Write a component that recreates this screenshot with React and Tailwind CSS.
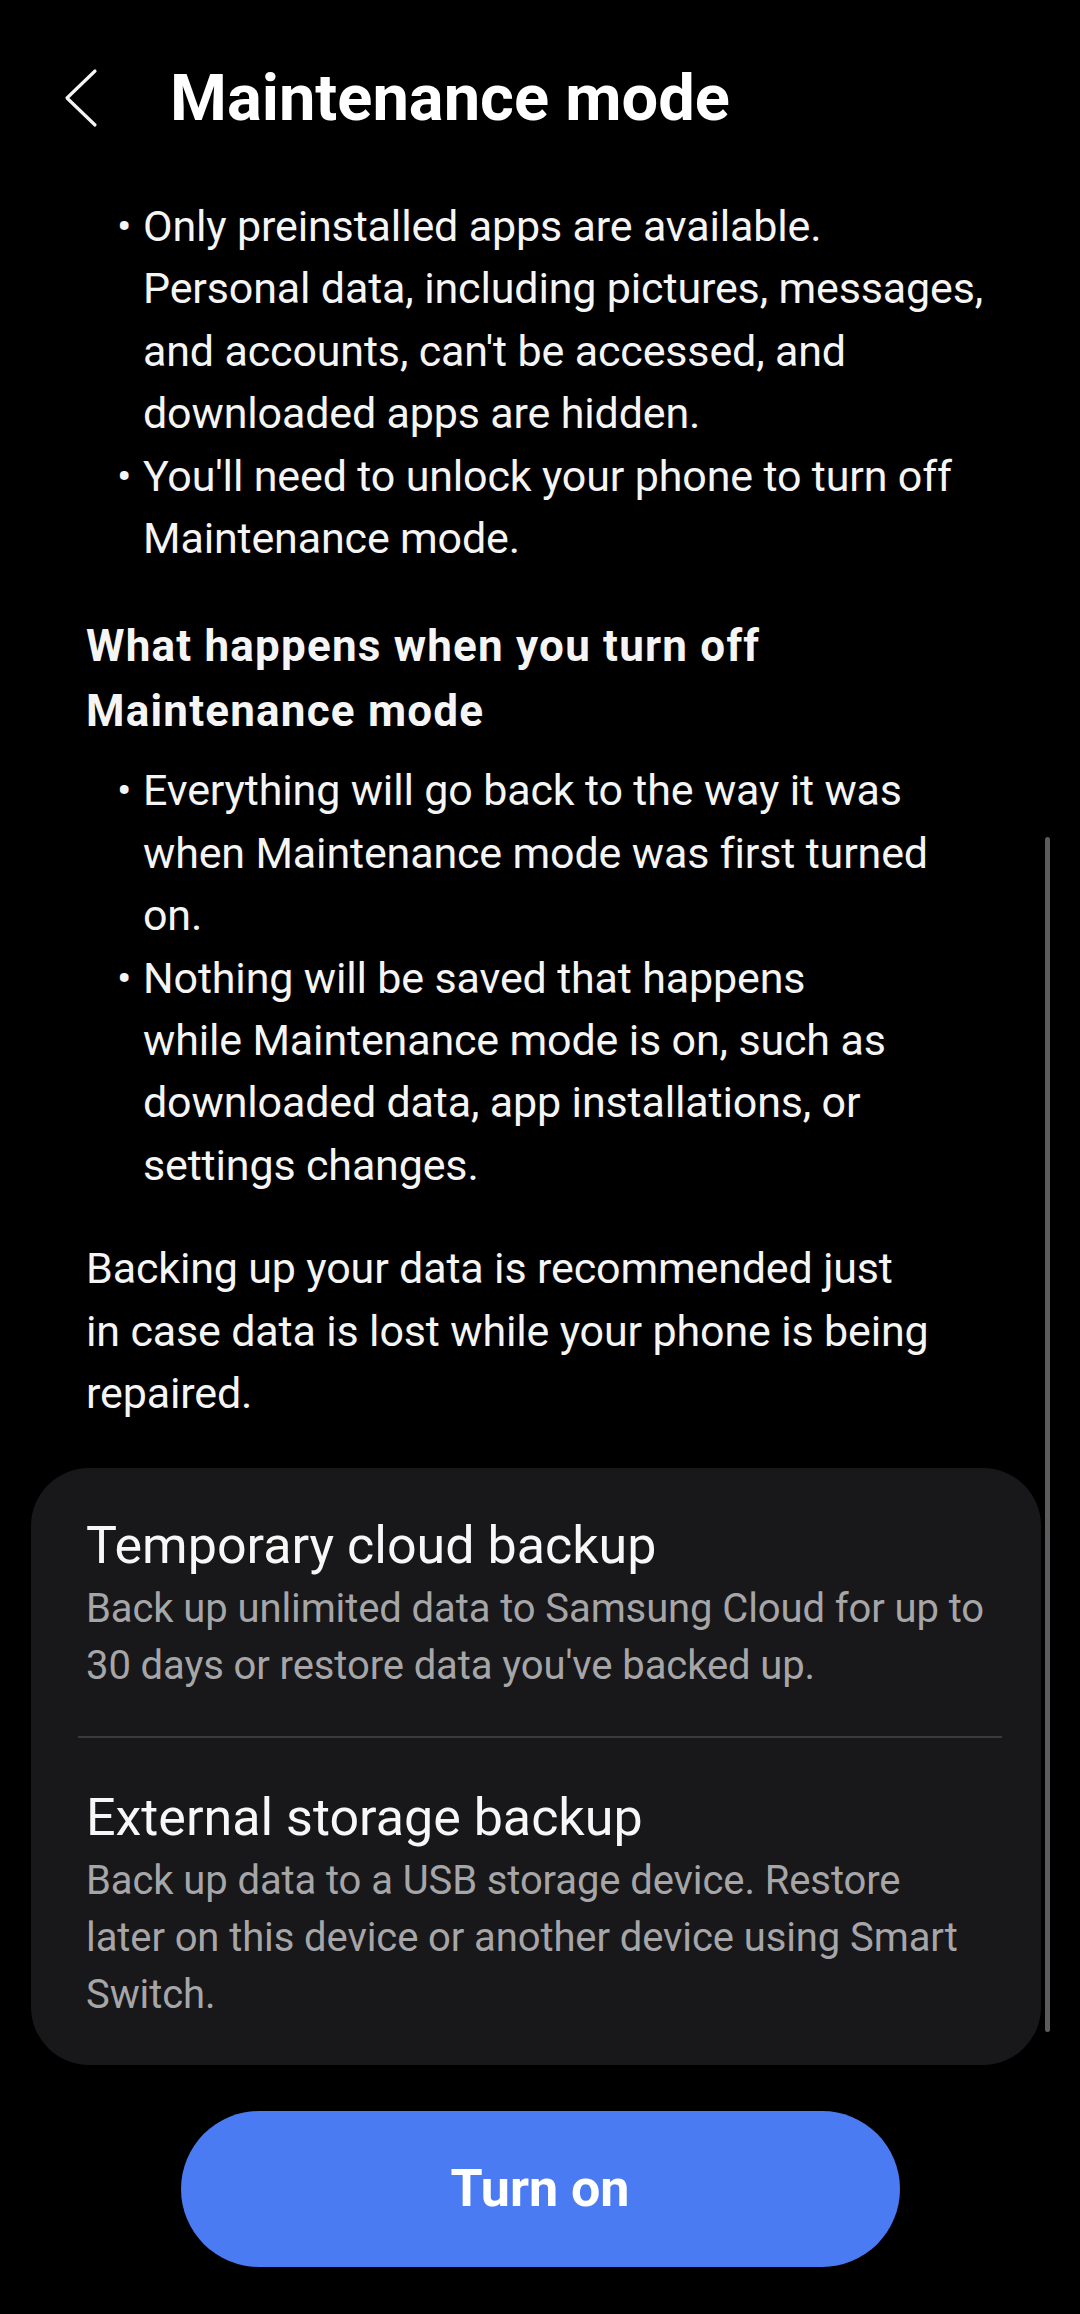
import React from 'react';

const listOne = [
  ['Only preinstalled apps are available.', 'Personal data, including pictures, messages,', "and accounts, can't be accessed, and", 'downloaded apps are hidden.'],
  ["You'll need to unlock your phone to turn off", 'Maintenance mode.'],
];

const listTwo = [
  ['Everything will go back to the way it was', 'when Maintenance mode was first turned', 'on.'],
  ['Nothing will be saved that happens', 'while Maintenance mode is on, such as', 'downloaded data, app installations, or', 'settings changes.'],
];

const backups = [
  { title: 'Temporary cloud backup', lines: ['Back up unlimited data to Samsung Cloud for up to', "30 days or restore data you've backed up."] },
  { title: 'External storage backup', lines: ['Back up data to a USB storage device. Restore', 'later on this device or another device using Smart', 'Switch.'] },
];

function Lines({ lines }) {
  return lines.map((line) => (
    <div key={line} className="whitespace-nowrap">{line}</div>
  ));
}

function BulletList({ items }) {
  return (
    <div className="pl-[117px] text-[43px] leading-[62.4px] tracking-[-0.15px] text-[#f5f5f5]">
      {items.map((lines) => (
        <div key={lines[0]} className="flex">
          <span className="w-[26px] shrink-0">•</span>
          <div><Lines lines={lines} /></div>
        </div>
      ))}
    </div>
  );
}

export default function App() {
  return (
    <div className="relative h-[2314px] w-[1080px] overflow-hidden bg-black font-['Roboto',sans-serif] text-white">
      <header className="flex h-[195px] items-center pl-[64px]">
        <svg width="34" height="60" viewBox="0 0 34 60" fill="none" stroke="#f5f5f5" strokeWidth="3.2" strokeLinecap="round" strokeLinejoin="round">
          <polyline points="31,3 3,30 31,57" />
        </svg>
        <h1 className="ml-[72px] text-[65px] font-bold leading-[62px]">Maintenance mode</h1>
      </header>

      <BulletList items={listOne} />

      <div className="mt-[45px] pl-[86px] text-[44px] font-bold leading-[65px] tracking-[1.2px] text-[#f5f5f5]">
        <Lines lines={['What happens when you turn off', 'Maintenance mode']} />
      </div>

      <div className="mt-[15px]">
        <BulletList items={listTwo} />
      </div>

      <div className="mt-[41px] pl-[86px] text-[43px] leading-[62.4px] tracking-[-0.15px] text-[#f5f5f5]">
        <Lines lines={['Backing up your data is recommended just', 'in case data is lost while your phone is being', 'repaired.']} />
      </div>

      <section className="ml-[31px] mt-[43px] w-[1010px] rounded-[58px] bg-[#18181a]">
        {backups.map((item, i) => (
          <div key={item.title}>
            {i > 0 && <div className="ml-[47px] mr-[39px] h-[2px] bg-[#3a3a3c]" />}
            <div className="pb-[42px] pl-[55px] pr-[30px] pt-[46px] [&:not(:first-child)]:pt-[48px]">
              <div className="whitespace-nowrap text-[52px] leading-[64px] text-[#f7f7f7]">{item.title}</div>
              <div className="mt-[2px] text-[40px] leading-[57px] tracking-[-0.1px] text-[#a6a6a8]">
                <Lines lines={item.lines} />
              </div>
            </div>
          </div>
        ))}
      </section>

      <div className="mt-[46px] flex justify-center">
        <button className="flex h-[156px] w-[719px] items-center justify-center rounded-full bg-[#4a7bf2] text-[52px] font-bold text-white">
          Turn on
        </button>
      </div>

      <div className="absolute left-[1045px] top-[837px] h-[1195px] w-[5px] rounded-full bg-[#5c5c5e]" />
    </div>
  );
}
